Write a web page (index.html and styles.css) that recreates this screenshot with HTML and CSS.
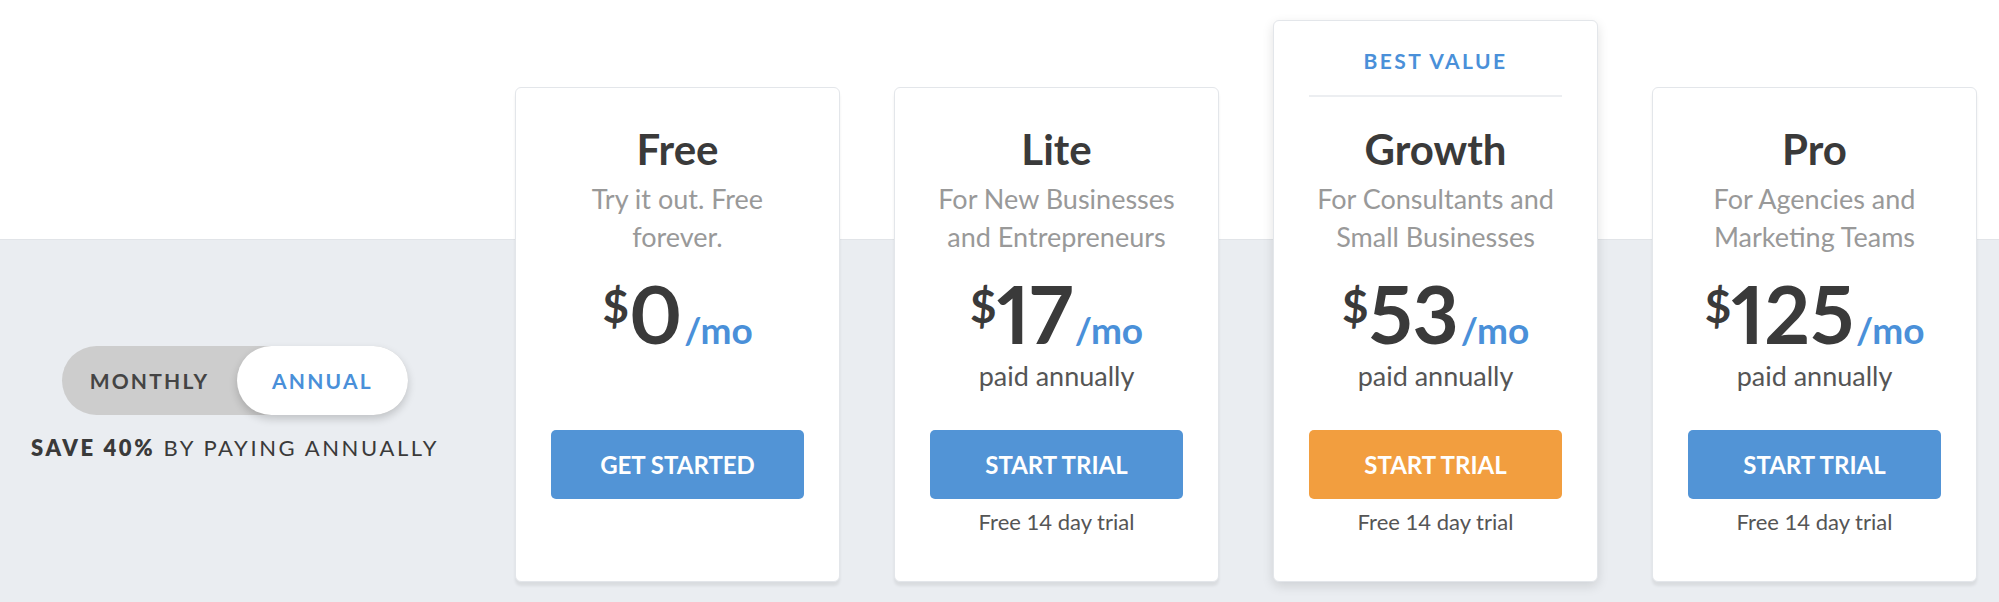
FILE: index.html
```html
<!DOCTYPE html>
<html lang="en">
<head>
    <meta charset="UTF-8">
    <meta name="viewport" content="width=device-width, initial-scale=1.0">
    <title>Pricing</title>
    <link rel="stylesheet" href="styles.css">
</head>
<body>
    <div class="pricing">
        <div class="billing">
            <div class="toggle">
                <span class="toggle-option">Monthly</span>
                <span class="toggle-option active">Annual</span>
            </div>
            <p class="save"><strong>Save 40%</strong> by paying annually</p>
        </div>

        <div class="plans">
            <div class="plan">
                <h2>Free</h2>
                <p class="tagline">Try it out. Free<br>forever.</p>
                <div class="price"><span class="cur">$</span>0<span class="per">/mo</span></div>
                <p class="billed"></p>
                <a class="plan-button" href="#">Get Started</a>
            </div>

            <div class="plan">
                <h2>Lite</h2>
                <p class="tagline">For New Businesses<br>and Entrepreneurs</p>
                <div class="price"><span class="cur">$</span>17<span class="per">/mo</span></div>
                <p class="billed">paid annually</p>
                <a class="plan-button" href="#">Start Trial</a>
                <p class="trial">Free 14 day trial</p>
            </div>

            <div class="plan featured">
                <div class="badge">Best Value</div>
                <h2>Growth</h2>
                <p class="tagline">For Consultants and<br>Small Businesses</p>
                <div class="price"><span class="cur">$</span>53<span class="per">/mo</span></div>
                <p class="billed">paid annually</p>
                <a class="plan-button orange" href="#">Start Trial</a>
                <p class="trial">Free 14 day trial</p>
            </div>

            <div class="plan">
                <h2>Pro</h2>
                <p class="tagline">For Agencies and<br>Marketing Teams</p>
                <div class="price"><span class="cur">$</span>125<span class="per">/mo</span></div>
                <p class="billed">paid annually</p>
                <a class="plan-button" href="#">Start Trial</a>
                <p class="trial">Free 14 day trial</p>
            </div>
        </div>
    </div>
</body>
</html>
```

FILE: styles.css
```css
body {
    margin: 0;
    font-family: Lato, 'Open Sans', sans-serif;
    color: #3a3a3a;
    background: linear-gradient(to bottom, #fff 0, #fff 239px, #e1e4e8 239px, #e1e4e8 240px, #eaedf1 240px);
    min-height: 602px;
}
.pricing {
    display: flex;
    gap: 45px;
    padding-top: 20px;
}
.billing {
    width: 470px;
    padding-top: 326px;
    text-align: center;
}
.toggle {
    display: inline-grid;
    grid-template-columns: 175px 171px;
    height: 69px;
    background: #cdcdcd;
    border-radius: 35px;
}
.toggle-option {
    display: flex;
    align-items: center;
    justify-content: center;
    font-size: 21px;
    font-weight: 700;
    letter-spacing: 2.2px;
    text-transform: uppercase;
    color: #444;
    border-radius: 35px;
}
.toggle-option.active {
    background: #fff;
    color: #4a90d9;
    box-shadow: 0 4px 8px rgba(0,0,0,0.18);
}
.save {
    margin: 18px 0 0;
    font-size: 22px;
    line-height: 30px;
    letter-spacing: 2.6px;
    text-transform: uppercase;
    color: #3a3a3a;
}
.save strong {
    font-weight: 800;
}
.plans {
    display: grid;
    grid-template-columns: repeat(4, 325px);
    grid-template-rows: 67px auto;
    column-gap: 54px;
}
.plan {
    grid-row: 2;
    background: #fff;
    border: 1px solid #e3e6ea;
    border-radius: 6px;
    box-shadow: 0 4px 3px rgba(0,0,0,0.07);
    padding: 36px 35px 44px;
    text-align: center;
}
.plan.featured {
    grid-row: 1 / 3;
    padding-top: 27px;
    box-shadow: 0 4px 12px rgba(0,0,0,0.12);
}
.badge {
    font-size: 21px;
    line-height: 25px;
    font-weight: 700;
    letter-spacing: 2.4px;
    text-transform: uppercase;
    color: #4a90d9;
    padding-bottom: 22px;
    border-bottom: 2px solid #eceef1;
    margin-bottom: 27px;
}
.plan h2 {
    margin: 0;
    font-size: 42px;
    line-height: 50px;
    font-weight: 700;
    color: #3a3a3a;
}
.tagline {
    margin: 6px 0 0;
    font-size: 27px;
    line-height: 38px;
    color: #999;
}
.price {
    margin-top: 18px;
    font-size: 80px;
    line-height: 78px;
    font-weight: 700;
    color: #3a3a3a;
    font-variant-numeric: proportional-nums;
}
.price .cur {
    font-size: 46px;
    line-height: 1;
    vertical-align: 21px;
}
.price .per {
    font-size: 37px;
    line-height: 1;
    color: #4a90d9;
    margin-left: 2px;
}
.billed {
    margin: 5px 0 0;
    min-height: 38px;
    font-size: 27px;
    line-height: 38px;
    color: #555;
}
.plan-button {
    display: block;
    margin-top: 35px;
    height: 69px;
    line-height: 69px;
    border-radius: 5px;
    background: #5294d6;
    color: #fff;
    font-size: 24px;
    font-weight: 700;
    text-transform: uppercase;
    text-decoration: none;
}
.plan-button.orange {
    background: #f29e3f;
}
.trial {
    margin: 8px 0 0;
    font-size: 22px;
    line-height: 30px;
    color: #555;
}
```
